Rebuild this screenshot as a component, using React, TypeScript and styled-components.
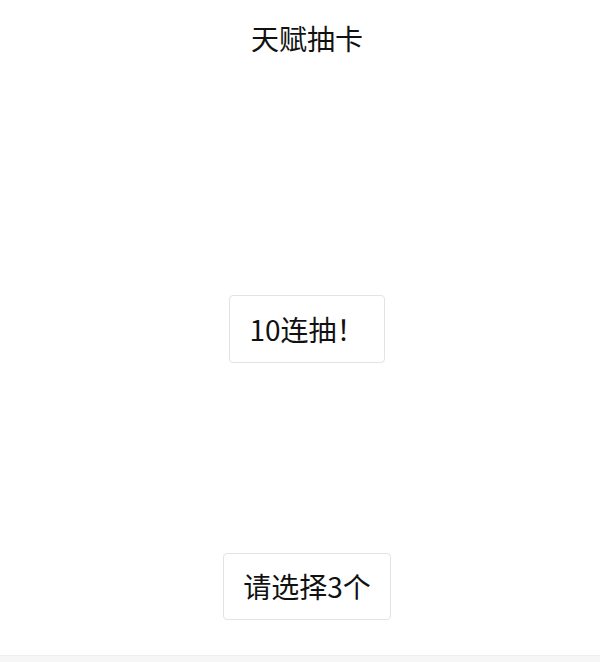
import React from "react";
import styled, { createGlobalStyle } from "styled-components";

const Global = createGlobalStyle`
  html, body { margin: 0; padding: 0; background: #ffffff; }
  body { font-family: "Noto Sans CJK SC", "Noto Sans", sans-serif; color: #111; }
`;

const Page = styled.div`
  display: flex;
  flex-direction: column;
  align-items: center;
  width: 600px;
  height: 662px;
  padding-left: 14px;
  box-sizing: border-box;
  overflow: hidden;
`;

const Title = styled.h1`
  margin: 0;
  padding-top: 18px;
  font-size: 28px;
  line-height: 40px;
  font-weight: 400;
  color: #111;
`;

const Button = styled.button<{ $top: number }>`
  margin-top: ${(p) => p.$top}px;
  height: 68px;
  padding: 0 19px;
  box-sizing: border-box;
  border: 1px solid #e3e3e3;
  border-radius: 4px;
  background: #fff;
  font-family: "Noto Sans CJK SC", "Noto Sans", sans-serif;
  font-size: 28px;
  line-height: 40px;
  color: #111;
  cursor: pointer;
`;

const Footer = styled.div`
  margin-top: 35px;
  margin-left: -14px;
  width: 600px;
  height: 6px;
  background: #f6f6f6;
  border-top: 1px solid #eeeeee;
  flex-shrink: 0;
`;

export default function App() {
  return (
    <>
      <Global />
      <Page>
        <Title>天赋抽卡</Title>
        <Button $top={237}>10连抽！</Button>
        <Button $top={190}>请选择3个</Button>
        <Footer />
      </Page>
    </>
  );
}
